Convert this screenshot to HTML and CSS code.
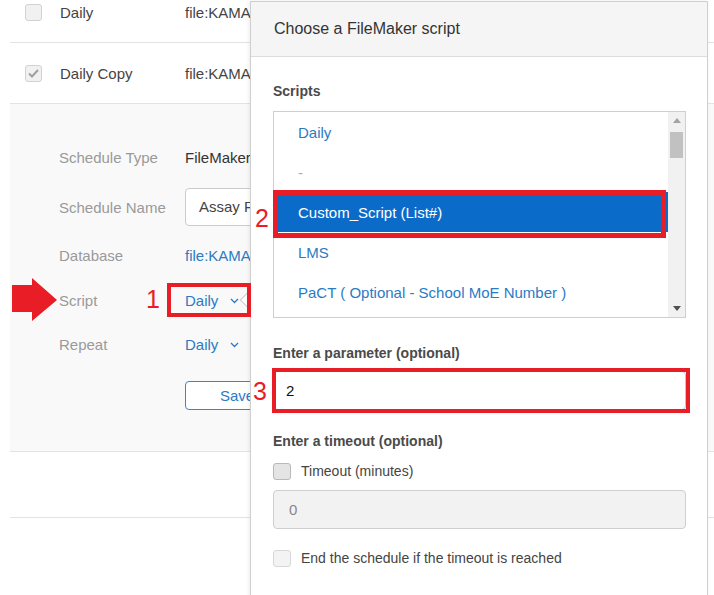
FILE: index.html
```html
<!DOCTYPE html>
<html lang="en">
<head>
  <meta charset="UTF-8">
  <title>Choose a FileMaker script</title>
  <link rel="stylesheet" href="styles.css">
</head>
<body>
  <div class="screen">

    <!-- schedules list (under the popover) -->
    <div class="schedules">
      <div class="row first">
        <span class="check"></span>
        <span class="name">Daily</span>
        <span class="file">file:KAMAR_Data</span>
      </div>
      <div class="row">
        <span class="check">
          <svg width="11" height="9" viewBox="0 0 11 9"><path d="M1 4.5 L4 7.5 L10 1" fill="none" stroke="#a0a0a0" stroke-width="2"/></svg>
        </span>
        <span class="name">Daily Copy</span>
        <span class="file">file:KAMAR_Data</span>
      </div>

      <div class="details">
        <div class="field">
          <span class="label">Schedule Type</span>
          <span class="value">FileMaker Script</span>
        </div>
        <div class="field field-name">
          <span class="label">Schedule Name</span>
          <span class="text-input">Assay Reminder</span>
        </div>
        <div class="field field-db">
          <span class="label">Database</span>
          <span class="value link">file:KAMAR_Data</span>
        </div>
        <div class="field field-script">
          <span class="label">Script</span>
          <span class="value link">Daily <svg class="chev" width="9" height="6" viewBox="0 0 9 6"><path d="M1 1 L4.5 4.5 L8 1" fill="none" stroke="#2b7bc4" stroke-width="1.3"/></svg></span>
        </div>
        <div class="field">
          <span class="label">Repeat</span>
          <span class="value link">Daily <svg class="chev" width="9" height="6" viewBox="0 0 9 6"><path d="M1 1 L4.5 4.5 L8 1" fill="none" stroke="#2b7bc4" stroke-width="1.3"/></svg></span>
        </div>
        <div class="actions">
          <button class="btn-save">Save</button>
        </div>
      </div>

      <div class="row empty"></div>
    </div>

    <!-- popover -->
    <div class="picker">
      <span class="picker-arrow"></span>
      <div class="picker-head">Choose a FileMaker script</div>
      <div class="picker-body">
        <div class="caption">Scripts</div>
        <div class="listbox">
          <ul class="options">
            <li>Daily</li>
            <li class="sep">-</li>
            <li class="selected">Custom_Script (List#)</li>
            <li>LMS</li>
            <li>PaCT ( Optional - School MoE Number )</li>
          </ul>
          <div class="scrollbar">
            <span class="sb-btn"><svg width="8" height="5" viewBox="0 0 8 5"><path d="M0 5 L4 0 L8 5 Z" fill="#a3a3a3"/></svg></span>
            <span class="sb-thumb"></span>
            <span class="sb-fill"></span>
            <span class="sb-btn"><svg width="8" height="5" viewBox="0 0 8 5"><path d="M0 0 L4 5 L8 0 Z" fill="#505050"/></svg></span>
          </div>
        </div>

        <div class="caption cap-param">Enter a parameter (optional)</div>
        <div class="input focused">2</div>

        <div class="caption cap-timeout">Enter a timeout (optional)</div>
        <label class="checkline">
          <span class="box"></span>
          Timeout (minutes)
        </label>
        <div class="input disabled">0</div>
        <label class="checkline end">
          <span class="box light"></span>
          End the schedule if the timeout is reached
        </label>
      </div>
    </div>

    <!-- annotations -->
    <svg class="pointer" width="46" height="44" viewBox="0 0 46 44">
      <path d="M0 7 L20 7 L20 0 L45 22 L20 43 L20 34 L0 34 Z" fill="#e81d25"/>
    </svg>
    <div class="mark mark-1"></div>
    <div class="mark mark-2"></div>
    <div class="mark mark-3"></div>
    <span class="num num-1">1</span>
    <span class="num num-2">2</span>
    <span class="num num-3">3</span>
  </div>
</body>
</html>
```

FILE: styles.css
```css
body {
  margin: 0;
  padding: 0;
  background: #fff;
  font-family: "Liberation Sans", Arial, sans-serif;
  color: #444;
  overflow: hidden;
}

.screen {
  position: relative;
  width: 714px;
  height: 595px;
  overflow: hidden;
}

/* list of schedules */
.schedules {
  margin-left: 10px;
  width: 704px;
}

.row {
  display: flex;
  align-items: center;
  height: 60px;
  border-bottom: 1px solid #e3e3e3;
  font-size: 15px;
  white-space: nowrap;
}

.row.first {
  margin-top: -18px;
}

.row.empty {
  height: 65px;
}

.check {
  box-sizing: border-box;
  width: 17px;
  height: 17px;
  margin-left: 15px;
  margin-right: 18px;
  border: 1px solid #d2d2d2;
  border-radius: 3px;
  background: #f1f1f1;
  display: flex;
  align-items: center;
  justify-content: center;
}

.name {
  width: 125px;
}

.details {
  height: 311px;
  padding-top: 36px;
  background: #f9f9f9;
  border-bottom: 1px solid #e3e3e3;
}

.field {
  display: grid;
  grid-template-columns: 126px auto;
  align-items: center;
  height: 34px;
  margin-top: 10px;
  padding-left: 49px;
  font-size: 15px;
  white-space: nowrap;
}

.field:first-child {
  margin-top: 0;
}

.field-name {
  height: 38px;
  margin-top: 14px;
}

.field-db {
  margin-top: 12px;
}

.field-script {
  margin-top: 11px;
}

.label {
  color: #9a9a9a;
}

.value {
  color: #333;
}

.value.link {
  color: #2b7bc4;
}

.chev {
  margin-left: 7px;
  vertical-align: 2px;
}

.text-input {
  box-sizing: border-box;
  width: 220px;
  height: 38px;
  line-height: 36px;
  padding-left: 13px;
  border: 1px solid #ccc;
  border-radius: 4px;
  background: #fff;
  color: #444;
}

.actions {
  margin-top: 20px;
  padding-left: 175px;
}

.btn-save {
  width: 104px;
  height: 29px;
  border: 1.5px solid #3d84c6;
  border-radius: 4px;
  background: #fff;
  color: #2b7bc4;
  font-family: inherit;
  font-size: 15px;
  padding: 0;
}

/* popover */
.picker {
  position: absolute;
  left: 250px;
  top: 1px;
  box-sizing: border-box;
  width: 458px;
  height: 620px;
  background: #fff;
  border: 1px solid #cfcfcf;
  box-shadow: -1px 0 4px rgba(0, 0, 0, 0.08);
}

.picker-arrow {
  position: absolute;
  left: -8px;
  top: 290px;
  width: 15px;
  height: 15px;
  background: #fff;
  border-left: 1px solid #cfcfcf;
  border-bottom: 1px solid #cfcfcf;
  transform: rotate(45deg);
}

.picker-head {
  height: 54px;
  line-height: 54px;
  padding: 0 23px;
  background: #f5f5f5;
  border-bottom: 1px solid #dcdcdc;
  font-size: 16px;
  color: #333;
}

.picker-body {
  padding: 24px 21px 0 22px;
}

.caption {
  line-height: 20px;
  font-size: 14px;
  font-weight: bold;
  color: #4a4a4a;
  margin-bottom: 10px;
}

.cap-param {
  margin-top: 25px;
  margin-bottom: 8px;
}

.cap-timeout {
  margin-top: 21px;
}

.listbox {
  box-sizing: border-box;
  display: flex;
  height: 207px;
  border: 1px solid #cfcfcf;
  overflow: hidden;
}

.options {
  flex: 1;
  margin: 0;
  padding: 0;
  list-style: none;
}

.options li {
  height: 40px;
  line-height: 41px;
  padding-left: 24px;
  font-size: 15px;
  color: #2b7bc4;
  white-space: nowrap;
}

.options li.sep {
  color: #aaa;
}

.options li.selected {
  background: #0b6bc8;
  color: #fff;
}

.scrollbar {
  width: 17px;
  background: #f1f1f1;
  display: flex;
  flex-direction: column;
  align-items: center;
}

.sb-btn {
  height: 17px;
  display: flex;
  align-items: center;
  justify-content: center;
}

.sb-thumb {
  width: 13px;
  height: 26px;
  margin-top: 3px;
  background: #c1c1c1;
}

.sb-fill {
  flex: 1;
}

.input {
  box-sizing: border-box;
  height: 39px;
  line-height: 37px;
  border-radius: 4px;
  font-size: 15px;
}

.input.focused {
  border: 1px solid #a9cdee;
  padding-left: 12px;
  color: #111;
}

.input.disabled {
  margin-top: 9px;
  border: 1px solid #cfcfcf;
  background: #f2f2f2;
  padding-left: 15px;
  color: #888;
}

.checkline {
  display: flex;
  align-items: center;
  height: 20px;
  margin-top: 10px;
  font-size: 14px;
  color: #444;
}

.checkline.end {
  margin-top: 19px;
}

.box {
  box-sizing: border-box;
  width: 18px;
  height: 17px;
  margin-right: 10px;
  border: 1px solid #b9b9b9;
  border-radius: 3px;
  background: #e4e4e4;
}

.box.light {
  border-color: #d8d8d8;
  background: #f3f3f3;
}

/* red annotations */
.pointer {
  position: absolute;
  left: 12px;
  top: 278px;
}

.mark {
  position: absolute;
  box-sizing: border-box;
  border: 4px solid #e81d25;
}

.mark-1 {
  left: 167px;
  top: 283px;
  width: 84px;
  height: 34px;
}

.mark-2 {
  left: 273px;
  top: 190px;
  width: 393px;
  height: 48px;
  border-width: 5px;
}

.mark-3 {
  left: 272px;
  top: 368px;
  width: 418px;
  height: 45px;
}

.num {
  position: absolute;
  font-size: 25px;
  line-height: 1;
  color: #e81d25;
}

.num-1 { left: 146px; top: 287px; }
.num-2 { left: 255px; top: 206px; }
.num-3 { left: 253px; top: 379px; }
```
